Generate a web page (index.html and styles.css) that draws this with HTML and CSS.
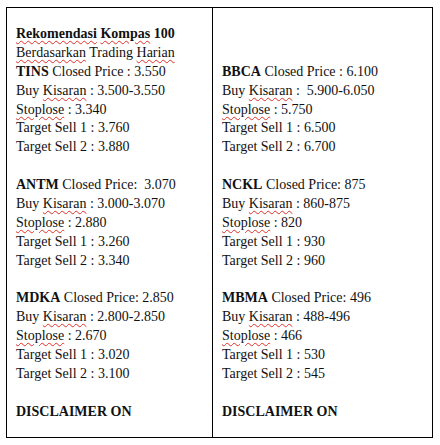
FILE: index.html
```html
<!DOCTYPE html>
<html>
<head>
    <title>Rekomendasi Kompas 100</title>
    <link rel="stylesheet" href="styles.css">
</head>
<body>
    <table class="rekomendasi">
        <tr>
            <td class="kolom kiri">
                <p class="judul"><b><span class="typo">Rekomendasi</span> <span class="typo">Kompas</span> 100</b></p>
                <p><span class="typo">Berdasarkan</span> Trading <span class="typo">Harian</span></p>
                <p><b>TINS</b> Closed Price : 3.550</p>
                <p>Buy <span class="typo">Kisaran</span> : 3.500-3.550</p>
                <p><span class="typo">Stoplose</span> : 3.340</p>
                <p>Target Sell 1 : 3.760</p>
                <p>Target Sell 2 : 3.880</p>
                <p class="kosong"></p>
                <p><b>ANTM</b> Closed Price:&nbsp; 3.070</p>
                <p>Buy <span class="typo">Kisaran</span> : 3.000-3.070</p>
                <p><span class="typo">Stoplose</span> : 2.880</p>
                <p>Target Sell 1 : 3.260</p>
                <p>Target Sell 2 : 3.340</p>
                <p class="kosong"></p>
                <p><b>MDKA</b> Closed Price: 2.850</p>
                <p>Buy <span class="typo">Kisaran</span> : 2.800-2.850</p>
                <p><span class="typo">Stoplose</span> : 2.670</p>
                <p>Target Sell 1 : 3.020</p>
                <p>Target Sell 2 : 3.100</p>
                <p class="kosong"></p>
                <p><b>DISCLAIMER ON</b></p>
            </td>
            <td class="kolom kanan">
                <p class="kosong"></p>
                <p class="kosong"></p>
                <p><b>BBCA</b> Closed Price : 6.100</p>
                <p>Buy <span class="typo">Kisaran</span> :&nbsp; 5.900-6.050</p>
                <p><span class="typo">Stoplose</span> : 5.750</p>
                <p>Target Sell 1 : 6.500</p>
                <p>Target Sell 2 : 6.700</p>
                <p class="kosong"></p>
                <p><b>NCKL</b> Closed Price: 875</p>
                <p>Buy <span class="typo">Kisaran</span> : 860-875</p>
                <p><span class="typo">Stoplose</span> : 820</p>
                <p>Target Sell 1 : 930</p>
                <p>Target Sell 2 : 960</p>
                <p class="kosong"></p>
                <p><b>MBMA</b> Closed Price: 496</p>
                <p>Buy <span class="typo">Kisaran</span> : 488-496</p>
                <p><span class="typo">Stoplose</span> : 466</p>
                <p>Target Sell 1 : 530</p>
                <p>Target Sell 2 : 545</p>
                <p class="kosong"></p>
                <p><b>DISCLAIMER ON</b></p>
            </td>
        </tr>
    </table>
</body>
</html>
```

FILE: styles.css
```css
body {
    margin: 7px 0 0 6px;
    background: #fff;
    color: #111;
    font-family: "Liberation Serif", "Times New Roman", serif;
    font-size: 14px;
}

.rekomendasi {
    border-collapse: collapse;
    table-layout: fixed;
    width: 427px;
}

.kolom {
    box-sizing: border-box;
    vertical-align: top;
    border: 1px solid #000;
    padding: 17px 8px 15px 9px;
}

.kiri {
    width: 206px;
}

p {
    margin: 0;
    height: 18.9px;
    line-height: 18.9px;
    white-space: nowrap;
}

/* garis merah ala pemeriksa ejaan */
.typo {
    text-decoration: underline wavy #e0302a;
    text-decoration-thickness: 1px;
    text-underline-offset: 2px;
}
```
